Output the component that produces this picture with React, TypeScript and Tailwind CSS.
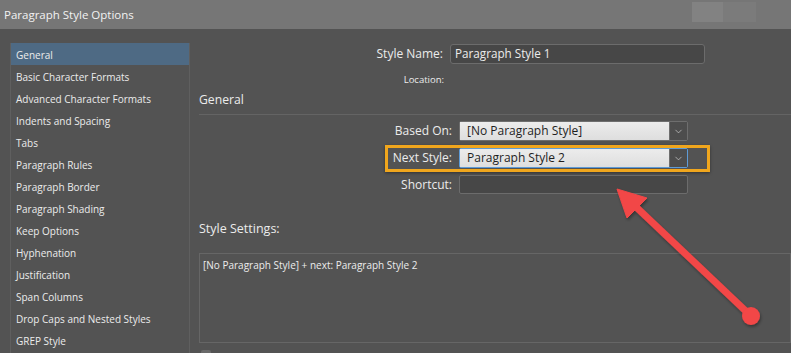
import { ChevronDown } from "lucide-react";

const SECTIONS = [
  "General",
  "Basic Character Formats",
  "Advanced Character Formats",
  "Indents and Spacing",
  "Tabs",
  "Paragraph Rules",
  "Paragraph Border",
  "Paragraph Shading",
  "Keep Options",
  "Hyphenation",
  "Justification",
  "Span Columns",
  "Drop Caps and Nested Styles",
  "GREP Style",
];

function Select({ value, focused }: { value: string; focused?: boolean }) {
  return (
    <div
      className={`flex h-[20px] w-[229px] rounded-[2px] border ${
        focused ? "border-[#5e9bd6]" : "border-[#6e6e6e]"
      }`}
    >
      <div className="flex flex-1 items-center bg-gradient-to-b from-[#ececec] to-[#dedede] pl-[7px] text-[12px] text-[#1e1e1e]">
        {value}
      </div>
      <div className="flex w-[18px] items-center justify-center border-l border-[#6e6e6e] bg-[#4d4d4d]">
        <ChevronDown size={11} strokeWidth={1.5} className="text-[#d0d0d0]" />
      </div>
    </div>
  );
}

export default function App() {
  return (
    <div
      className="relative flex h-[353px] w-[791px] flex-col overflow-hidden bg-[#535353] text-[#ececec]"
      style={{ fontFamily: '"Open Sans", "Noto Sans", sans-serif' }}
    >
      {/* Title bar */}
      <div className="flex h-[29px] shrink-0 items-center justify-between bg-[#767676] pl-[4px]">
        <span className="text-[11.5px] text-[#f2f2f2]">Paragraph Style Options</span>
        <div className="mr-[35px] flex h-[20px] self-start mt-[2px]">
          <div className="w-[31px] bg-[#828282]" />
          <div className="w-[33px] bg-[#7b7b7b]" />
        </div>
      </div>

      <div className="flex flex-1">
        {/* Sidebar */}
        <div className="ml-[10px] mt-[14px] w-[180px] shrink-0 border-x border-[#5f5f5f]">
          {SECTIONS.map((s, i) => (
            <div
              key={s}
              className={`flex h-[22px] items-center pl-[5px] pt-[3px] text-[10px] ${
                i === 0 ? "bg-[#4e6a84]" : ""
              }`}
            >
              {s}
            </div>
          ))}
        </div>

        {/* Main pane */}
        <div className="flex flex-1 flex-col pl-[9px]">
          <div className="mt-[15px] flex items-center gap-[7px]">
            <div className="w-[244px] text-right text-[12px]">Style Name:</div>
            <div className="flex h-[20px] w-[255px] items-center rounded-[3px] border border-[#6c6c6c] bg-[#474747] pl-[4px] text-[11.7px]">
              Paragraph Style 1
            </div>
          </div>
          <div className="mt-[6px] flex h-[20px] items-center">
            <div className="w-[245px] text-right text-[9.5px]">Location:</div>
          </div>

          <div className="mt-[1px] text-[12.2px]">General</div>
          <div className="mt-[5px] h-px bg-[#646464]" />

          <div className="mt-[6px] flex flex-col gap-[7px]">
            <div className="flex items-center gap-[7px]">
              <div className="w-[253px] text-right text-[12px]">Based On:</div>
              <Select value="[No Paragraph Style]" />
            </div>
            <div className="relative flex items-center gap-[7px]">
              <div className="pointer-events-none absolute left-[186px] top-[-3px] h-[27px] w-[325px] border-[3px] border-[#f0a61d] shadow-[0_1px_3px_rgba(0,0,0,0.4)]" />
              <div className="w-[253px] text-right text-[12px]">Next Style:</div>
              <Select value="Paragraph Style 2" focused />
            </div>
            <div className="flex items-center gap-[7px]">
              <div className="w-[253px] text-right text-[12px]">Shortcut:</div>
              <div className="h-[19px] w-[229px] rounded-[2px] border border-[#6c6c6c] bg-[#474747]" />
            </div>
          </div>

          <div className="mt-[26px] text-[12.5px]">Style Settings:</div>

          <div className="mt-[14px] h-[90px] border border-[#666666] px-[3px] pt-[4px] text-[10px]">
            [No Paragraph Style] + next: Paragraph Style 2
          </div>
          <div className="ml-[2px] mt-[7px] h-[8px] w-[10px] rounded-[2px] bg-[#6a6a6a]" />
        </div>
      </div>

      {/* Annotation arrow */}
      <svg
        className="pointer-events-none absolute left-0 top-0"
        width="791"
        height="353"
        viewBox="0 0 791 353"
      >
        <defs>
          <filter id="sh" x="-20%" y="-20%" width="140%" height="140%">
            <feDropShadow dx="1" dy="2" stdDeviation="1.5" floodColor="#000" floodOpacity="0.35" />
          </filter>
        </defs>
        <g filter="url(#sh)" fill="#f24646" stroke="#f24646">
          <line x1="751" y1="316" x2="634" y2="205" strokeWidth="7" strokeLinecap="round" />
          <polygon points="617,189 647,198 627,218" strokeWidth="1" strokeLinejoin="round" />
          <circle cx="751" cy="316" r="9" stroke="none" />
        </g>
      </svg>
    </div>
  );
}
